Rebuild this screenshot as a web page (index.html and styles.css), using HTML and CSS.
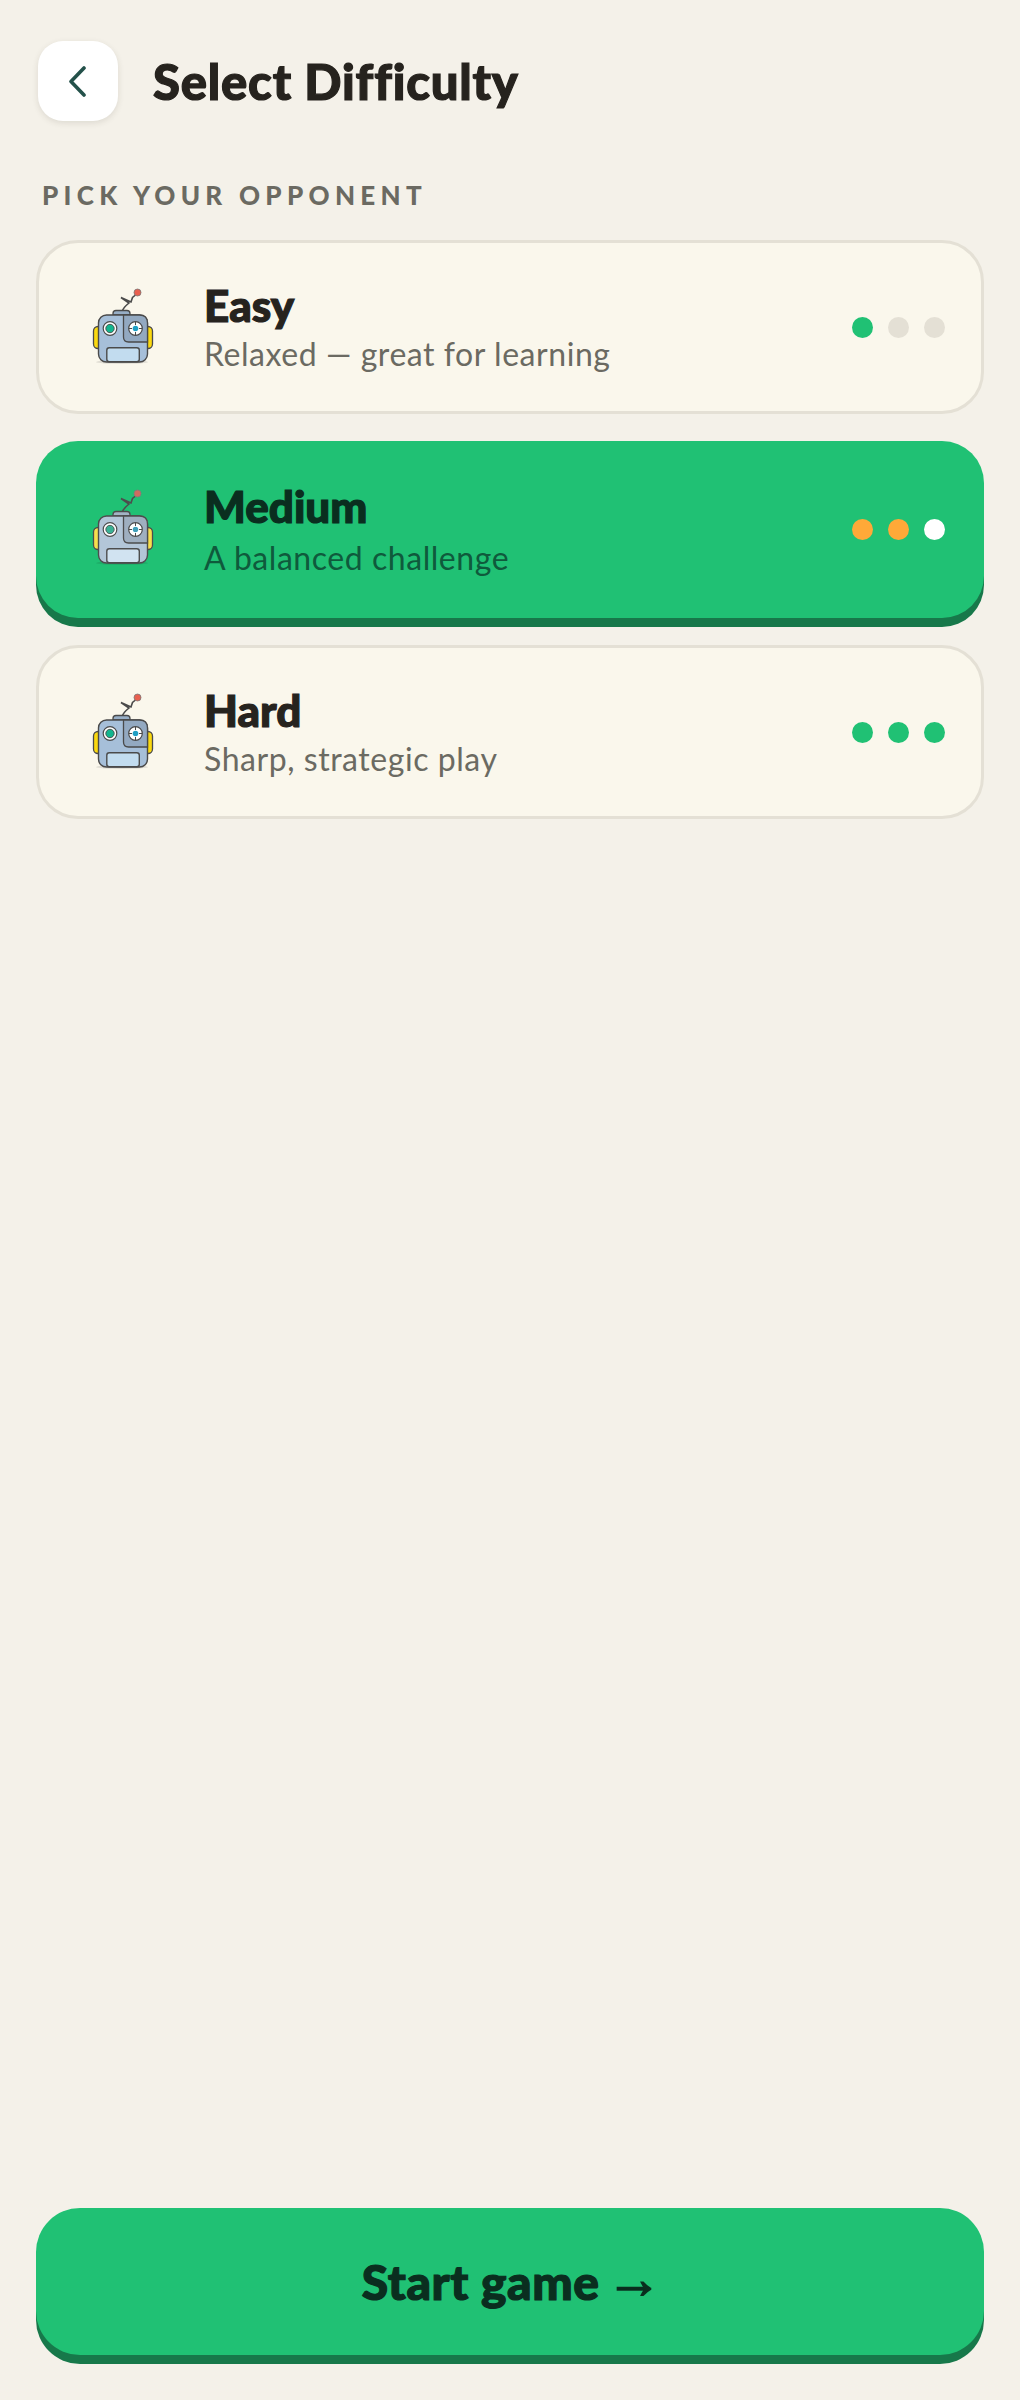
FILE: index.html
```html
<!DOCTYPE html>
<html lang="en">
<head>
    <meta charset="UTF-8">
    <meta name="viewport" content="width=device-width, initial-scale=1.0">
    <link rel="stylesheet" href="styles.css">
    <title>Select Difficulty</title>
</head>
<body>
    <svg class="defs" width="0" height="0" aria-hidden="true">
        <symbol id="robot" viewBox="26 14 72 84">
            <ellipse cx="62" cy="92" rx="26" ry="2" fill="#000" opacity="0.1"/>
            <rect x="33.500" y="56.500" width="11" height="22" rx="4.500" fill="#fbd90f" stroke="#4a4a4a" stroke-width="1.300"/>
            <rect x="81.500" y="56.500" width="11" height="22" rx="4.500" fill="#fbd90f" stroke="#4a4a4a" stroke-width="1.300"/>
            <path d="M53 45v-1.500q0-3 3-3h11q3 0 3 3v1.500z" fill="#97aec6" stroke="#4a4a4a" stroke-width="1.300"/>
            <path d="M62.500 40.500q1-3 6.500-7.500l-8-5.500 10 4.500 1.500-4.500 3-2.500" fill="none" stroke="#4a4a4a" stroke-width="1.600"/>
            <circle cx="77.500" cy="22.500" r="3.500" fill="#e8604f" stroke="#777" stroke-width="0.800"/>
            <rect x="38.500" y="45" width="49" height="47" rx="8" fill="#a6bfd9" stroke="#4a4a4a" stroke-width="1.400"/>
            <path d="M63.500 45h16q8 0 8 8v19h-19q-5 0-5-5z" fill="#93a9c1" stroke="#4a4a4a" stroke-width="1.300"/>
            <circle cx="50" cy="58.500" r="6.800" fill="#fff" stroke="#4a4a4a" stroke-width="1.200"/>
            <circle cx="50" cy="58.500" r="4.200" fill="#12b58e" stroke="#4a4a4a" stroke-width="0.900"/>
            <circle cx="75.500" cy="58.500" r="6.800" fill="#fff" stroke="#4a4a4a" stroke-width="1.200"/>
            <circle cx="75.500" cy="58.500" r="2.800" fill="#1f9fc4"/>
            <path d="M75.500 52v3M75.500 62v3M69 58.500h3M79 58.500h3" stroke="#4a4a4a" stroke-width="1"/>
            <rect x="46.800" y="77.800" width="32.500" height="14" rx="2.500" fill="#c2dcef" stroke="#4a4a4a" stroke-width="1.400"/>
        </symbol>
    </svg>

    <div class="screen">
        <header class="topbar">
            <button class="back" aria-label="Back">
                <svg width="20" height="32" viewBox="0 0 20 32"><path d="M16 3 3 16.500 16 30" fill="none" stroke="#24514a" stroke-width="3.600" stroke-linecap="round" stroke-linejoin="round"/></svg>
            </button>
            <h1 class="title">Select Difficulty</h1>
        </header>

        <div class="label">PICK YOUR OPPONENT</div>

        <div class="list">
            <div class="card">
                <svg class="robot"><use href="#robot"/></svg>
                <div class="info">
                    <div class="name">Easy</div>
                    <div class="desc">Relaxed — great for learning</div>
                </div>
                <div class="dots">
                    <span class="dot green"></span>
                    <span class="dot"></span>
                    <span class="dot"></span>
                </div>
            </div>
            <div class="card selected">
                <svg class="robot"><use href="#robot"/></svg>
                <div class="info">
                    <div class="name">Medium</div>
                    <div class="desc">A balanced challenge</div>
                </div>
                <div class="dots">
                    <span class="dot orange"></span>
                    <span class="dot orange"></span>
                    <span class="dot white"></span>
                </div>
            </div>
            <div class="card">
                <svg class="robot"><use href="#robot"/></svg>
                <div class="info">
                    <div class="name">Hard</div>
                    <div class="desc">Sharp, strategic play</div>
                </div>
                <div class="dots">
                    <span class="dot green"></span>
                    <span class="dot green"></span>
                    <span class="dot green"></span>
                </div>
            </div>
        </div>

        <button class="start">Start game <span class="arrow">→</span></button>
    </div>
</body>
</html>
```

FILE: styles.css
```css
html, body {
    margin: 0;
    height: 100%;
    background-color: #f4f1e9;
}

.defs {
    position: absolute;
}

.screen {
    box-sizing: border-box;
    height: 2400px;
    padding: 41px 36px 45px;
    display: flex;
    flex-direction: column;
}

.topbar {
    display: flex;
    align-items: center;
    gap: 35px;
    padding-left: 2px;
}

.back {
    width: 80px;
    height: 80px;
    padding: 0;
    border: 0;
    border-radius: 25px;
    background: #fff;
    box-shadow: 0 2px 6px rgba(60, 50, 30, 0.12);
    display: flex;
    align-items: center;
    justify-content: center;
}

.title {
    margin: 0;
    font-family: "Lato", sans-serif;
    font-size: 49px;
    font-weight: 900;
    letter-spacing: 0.8px;
    color: #26231e;
    -webkit-text-stroke: 1.2px #26231e;
}

.label {
    margin: 58px 0 0 6px;
    font-family: "Lato", sans-serif;
    font-size: 26px;
    line-height: 32px;
    font-weight: 900;
    letter-spacing: 5.300px;
    color: #6b6a62;
}

.list {
    margin-top: 29px;
    display: flex;
    flex-direction: column;
    gap: 27px;
}

.card {
    box-sizing: border-box;
    height: 174px;
    padding: 0 36px 0 47px;
    border: 3px solid #e4e0d5;
    border-radius: 42px;
    background: #faf7ec;
    display: flex;
    align-items: center;
    gap: 46px;
}

.card.selected {
    height: 177px;
    border: 0;
    padding: 0 39px 0 50px;
    background: #20c174;
    box-shadow: 0 9px 0 #17784a;
}

.robot {
    width: 72px;
    height: 84px;
    flex: none;
    margin-bottom: 2px;
}

.selected .robot {
    margin-bottom: 6px;
    filter: saturate(0.7) brightness(1.04);
}

.info {
    flex: 1;
}

.name {
    font-family: "Lato", sans-serif;
    font-size: 44px;
    line-height: 50px;
    font-weight: 900;
    color: #26231e;
    -webkit-text-stroke: 1.2px #26231e;
}

.desc {
    margin-top: 4px;
    font-family: "Lato", sans-serif;
    font-size: 32px;
    line-height: 40px;
    letter-spacing: 0.550px;
    color: #6b6a62;
}

.selected .name {
    color: #0a2e1f;
    -webkit-text-stroke-color: #0a2e1f;
}

.selected .desc {
    margin-top: 7px;
    color: #0f5a3c;
}

.dots {
    display: flex;
    gap: 15px;
}

.dot {
    width: 21px;
    height: 21px;
    border-radius: 50%;
    background: #e4e0d5;
}

.dot.green {
    background: #20c174;
}

.dot.orange {
    background: #ffa938;
}

.dot.white {
    background: #fff;
}

.start {
    margin-top: auto;
    height: 147px;
    padding: 0 0 0 4px;
    border: 0;
    border-radius: 44px;
    background: #20c174;
    box-shadow: 0 9px 0 #17784a;
    font-family: "Lato", sans-serif;
    font-size: 48px;
    line-height: 60px;
    font-weight: 900;
    letter-spacing: 0.600px;
    color: #0a2e1f;
    -webkit-text-stroke: 1.2px #0a2e1f;
}

.arrow {
    margin-left: -6px;
    font-family: "Liberation Sans", sans-serif;
    font-size: 56px;
    line-height: 40px;
    font-weight: 700;
    vertical-align: 2px;
    -webkit-text-stroke: 1.500px #0a2e1f;
}
```
